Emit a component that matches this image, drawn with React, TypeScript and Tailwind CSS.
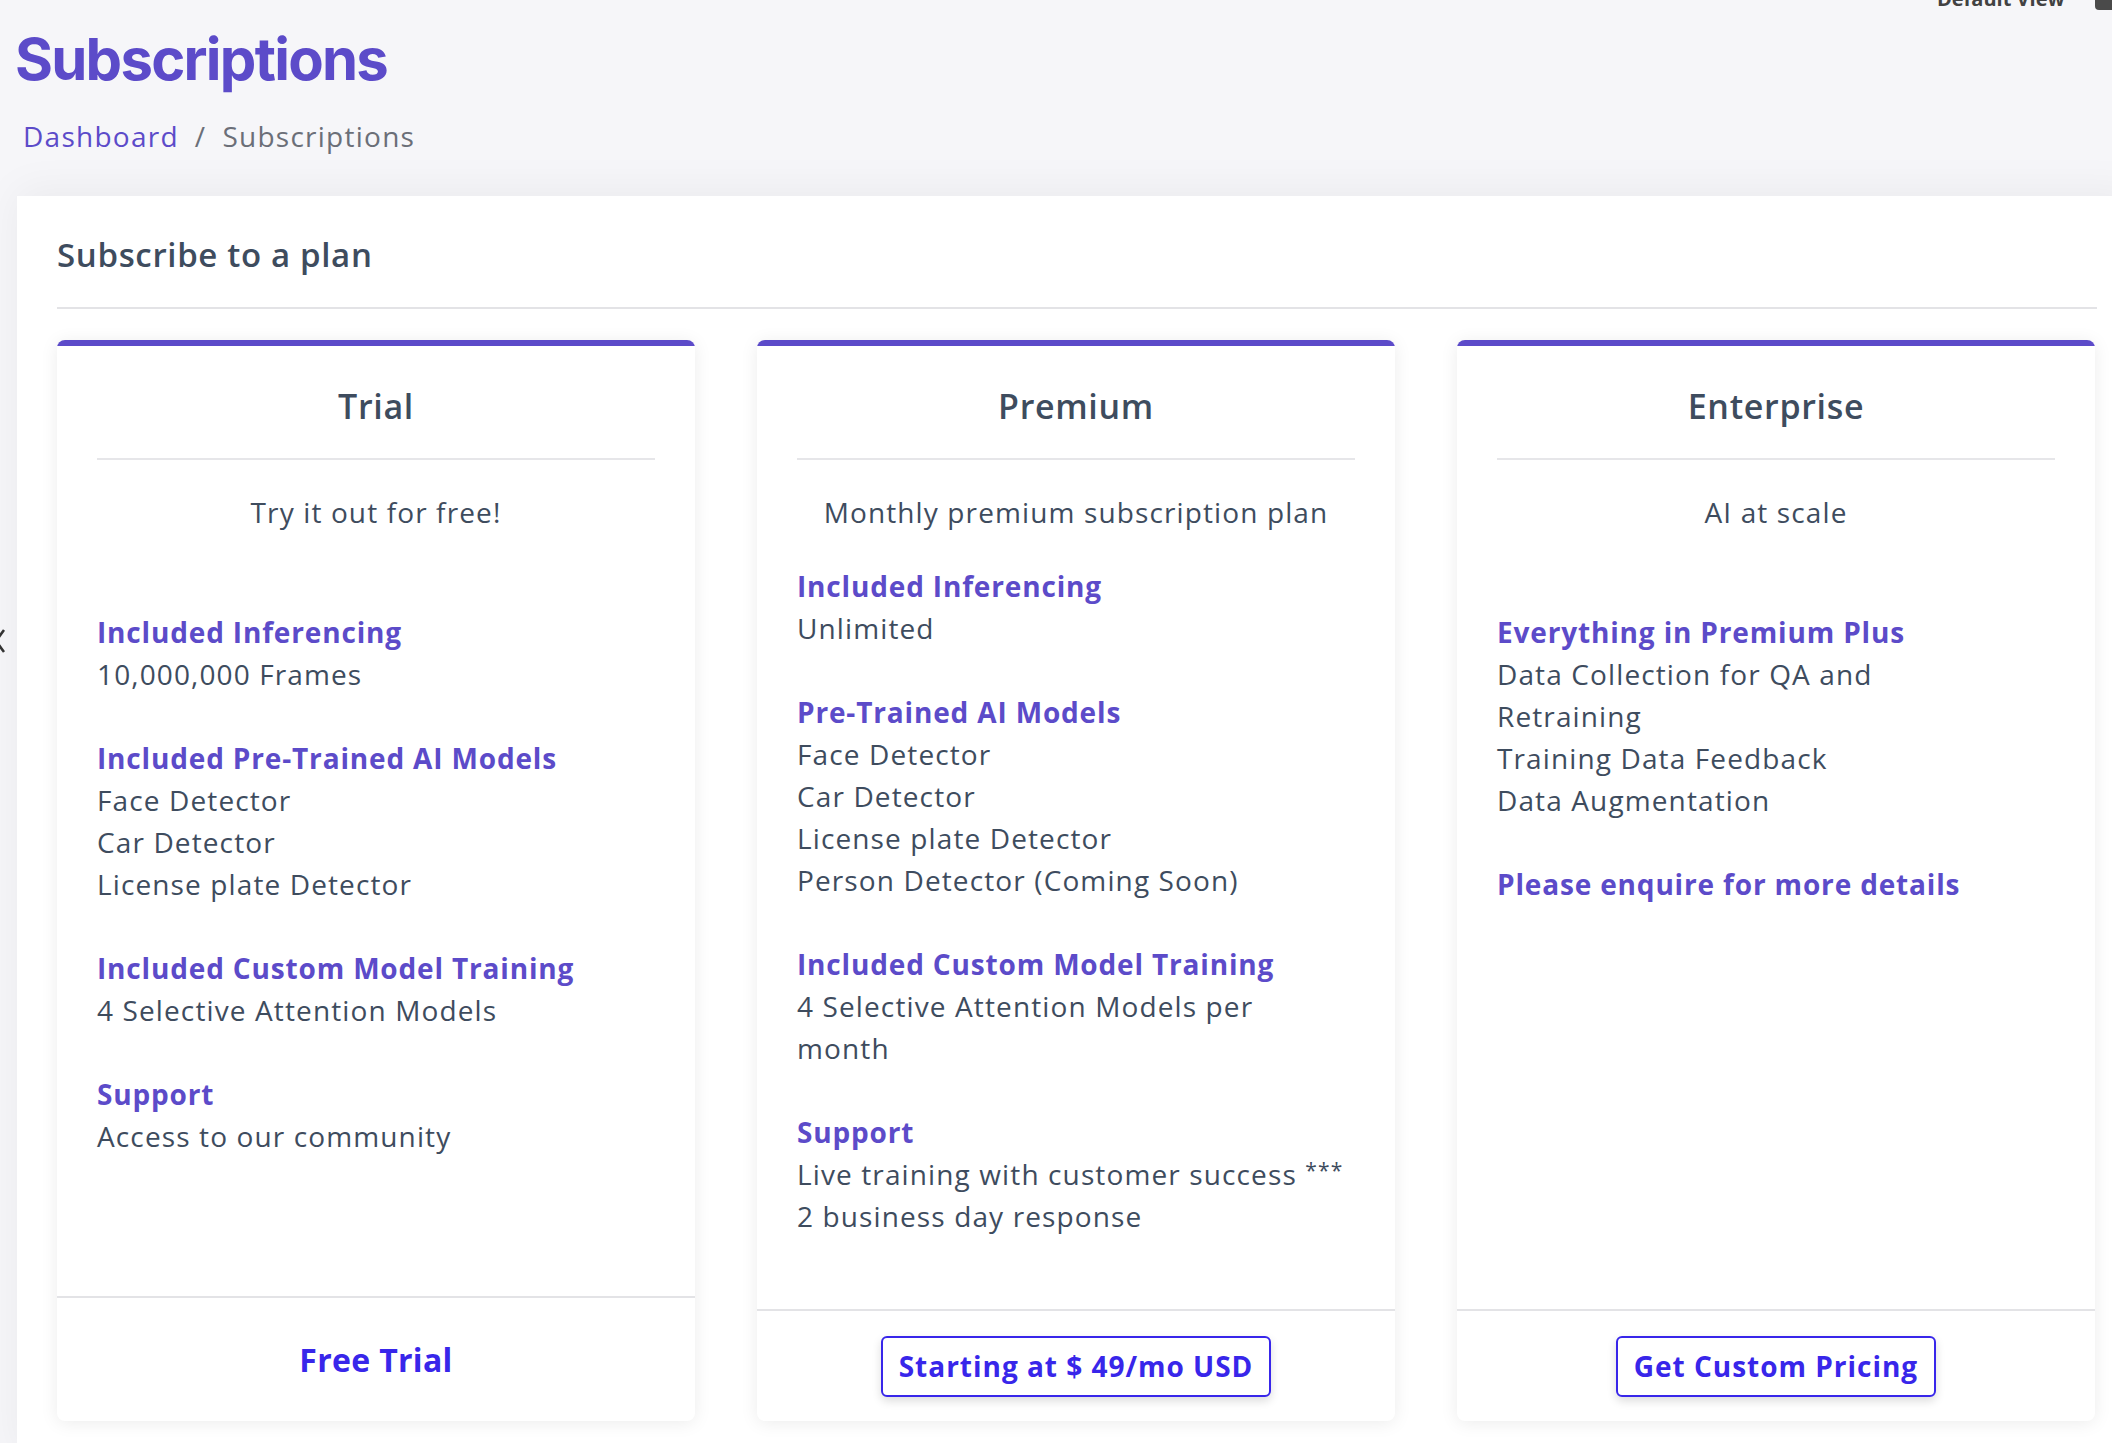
import React from 'react';

type Section = { title: string; lines: React.ReactNode[] };

type Plan = {
  name: string;
  blurb: string;
  extraGap?: boolean;
  sections: Section[];
  cta: string;
  ctaStyle: 'link' | 'button';
};

const plans: Plan[] = [
  {
    name: 'Trial',
    blurb: 'Try it out for free!',
    extraGap: true,
    sections: [
      { title: 'Included Inferencing', lines: ['10,000,000 Frames'] },
      {
        title: 'Included Pre-Trained AI Models',
        lines: ['Face Detector', 'Car Detector', 'License plate Detector'],
      },
      { title: 'Included Custom Model Training', lines: ['4 Selective Attention Models'] },
      { title: 'Support', lines: ['Access to our community'] },
    ],
    cta: 'Free Trial',
    ctaStyle: 'link',
  },
  {
    name: 'Premium',
    blurb: 'Monthly premium subscription plan',
    sections: [
      { title: 'Included Inferencing', lines: ['Unlimited'] },
      {
        title: 'Pre-Trained AI Models',
        lines: ['Face Detector', 'Car Detector', 'License plate Detector', 'Person Detector (Coming Soon)'],
      },
      { title: 'Included Custom Model Training', lines: ['4 Selective Attention Models per', 'month'] },
      {
        title: 'Support',
        lines: [
          <>
            Live training with customer success{' '}
            <span className="relative -top-[7px] text-[21px] leading-none">***</span>
          </>,
          '2 business day response',
        ],
      },
    ],
    cta: 'Starting at $ 49/mo USD',
    ctaStyle: 'button',
  },
  {
    name: 'Enterprise',
    blurb: 'AI at scale',
    extraGap: true,
    sections: [
      {
        title: 'Everything in Premium Plus',
        lines: ['Data Collection for QA and', 'Retraining', 'Training Data Feedback', 'Data Augmentation'],
      },
      { title: 'Please enquire for more details', lines: [] },
    ],
    cta: 'Get Custom Pricing',
    ctaStyle: 'button',
  },
];

const PlanCard = ({ plan }: { plan: Plan }) => (
  <div className="flex flex-col overflow-hidden rounded-lg bg-white shadow-[0_2px_18px_rgba(0,0,0,0.08)]">
    <div className="h-[6px] bg-[#5c4bc9]" />

    <div className="px-10">
      <h3 className="pt-[38px] pb-[30px] text-center text-[34px] leading-[44px] font-semibold tracking-[0.02em] text-[#3e4c5e]">
        {plan.name}
      </h3>
      <div className="h-[2px] bg-[#e6e6e9]" />
      <p className="mt-[31px] text-center text-[28px] leading-[42px] tracking-[0.04em] text-[#3e4c5e]">
        {plan.blurb}
      </p>
    </div>

    <div
      className={
        plan.extraGap
          ? 'mt-[78px] flex flex-1 flex-col gap-[42px] px-10 pb-[72px]'
          : 'mt-[32px] flex flex-1 flex-col gap-[42px] px-10 pb-[72px]'
      }
    >
      {plan.sections.map((s) => (
        <div key={s.title} className="text-[28px] leading-[42px]">
          <div className="font-bold tracking-[0.03em] text-[#5c4bc9]">{s.title}</div>
          {s.lines.map((line, i) => (
            <div key={i} className="tracking-[0.04em] text-[#3e4c5e]">
              {line}
            </div>
          ))}
        </div>
      ))}
    </div>

    {plan.ctaStyle === 'link' ? (
      <div className="flex h-[125px] items-center justify-center border-t-2 border-[#e3e3e6]">
        <span className="text-[32px] leading-[44px] font-bold tracking-[0.01em] text-[#3826ea]">{plan.cta}</span>
      </div>
    ) : (
      <div className="flex h-[112px] items-center justify-center border-t-2 border-[#e3e3e6]">
        <button className="flex h-[61px] items-center rounded-[6px] border-2 border-[#3826ea] bg-white px-[16px] text-[28px] font-bold tracking-[0.035em] text-[#3826ea] shadow-[0_4px_10px_rgba(0,0,0,0.14)]">
          {plan.cta}
        </button>
      </div>
    )}
  </div>
);

export default function App() {
  return (
    <div className="relative h-[1443px] w-[2112px] overflow-hidden bg-[#f6f6f9] font-['Open_Sans',sans-serif]">
      {/* toolbar cut off at the top edge */}
      <div className="absolute top-[-16px] left-[1937px] text-[20px] font-bold text-[#424242]">Default View</div>
      <div className="absolute top-[-6px] left-[2095px] h-[16px] w-[20px] rounded-sm bg-[#4a4a4a]" />
      <svg
        className="absolute top-[628px] left-[-8px] h-[26px] w-[14px] text-[#333]"
        viewBox="0 0 14 26"
        fill="none"
        stroke="currentColor"
        strokeWidth="2.5"
      >
        <path d="M12 2 L4 13 L12 24" />
      </svg>

      <div className="pt-[30px] pl-[15px]">
        <h1 className="font-['Inter',sans-serif] text-[58px] leading-none font-bold tracking-[-0.03em] text-[#5c4bc9]">
          Subscriptions
        </h1>
        <nav className="mt-[28px] ml-[8px] flex items-center text-[28px] leading-[40px] tracking-[0.045em]">
          <span className="text-[#5c4bc9]">Dashboard</span>
          <span className="px-[16px] text-[#6b6f78]">/</span>
          <span className="text-[#6b6f78]">Subscriptions</span>
        </nav>
      </div>

      <div className="mt-[40px] ml-[17px] w-[2120px] bg-white px-10 pt-[37px] pb-10 shadow-[0_-6px_40px_rgba(0,0,0,0.05)]">
        <h2 className="text-[33px] leading-[44px] font-semibold tracking-[0.02em] text-[#3e4c5e]">Subscribe to a plan</h2>
        <div className="mt-[30px] h-[2px] bg-[#e3e3e6]" />
        <div className="mt-[31px] grid w-[2038px] grid-cols-3 gap-[62px]">
          {plans.map((p) => (
            <PlanCard key={p.name} plan={p} />
          ))}
        </div>
      </div>
    </div>
  );
}
